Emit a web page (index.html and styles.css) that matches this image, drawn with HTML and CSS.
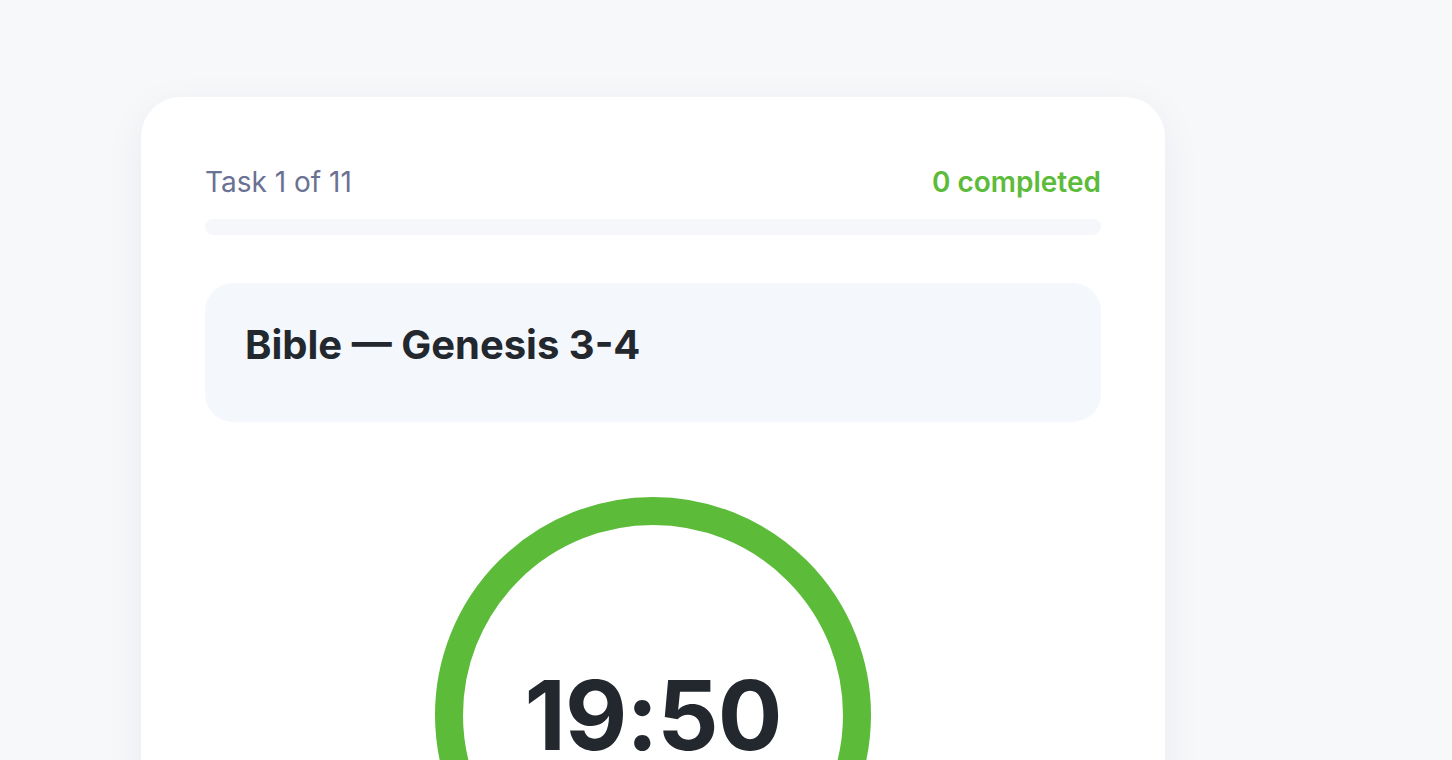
FILE: index.html
```html
<!DOCTYPE html>
<html>
<head>
<meta charset="utf-8">
<link rel="stylesheet" href="styles.css">
</head>
<body>
<main class="page">
  <section class="card">
    <div class="header">
      <span class="task-count">Task 1 of 11</span>
      <span class="completed">0 completed</span>
    </div>
    <div class="progress"><div class="progress-fill" style="width:0%"></div></div>
    <div class="task-box">
      <h1 class="task-title">Bible — Genesis 3-4</h1>
    </div>
    <div class="timer">
      <svg class="ring" width="436" height="436" viewBox="0 0 436 436">
        <circle cx="218" cy="218" r="204" fill="none" stroke="#5cbc3a" stroke-width="28"/>
      </svg>
      <div class="time">19:50</div>
    </div>
  </section>
</main>
</body>
</html>
```
FILE: styles.css
```css
html, body {
  margin: 0;
  padding: 0;
  background: #f7f8fa;
  font-family: Inter, "Noto Sans", sans-serif;
  overflow: hidden;
}
.page {
  display: flex;
  padding: 97px 0 0 141px;
  height: 760px;
  box-sizing: border-box;
}
.card {
  width: 1024px;
  background: #ffffff;
  border-radius: 40px;
  padding: 64px 64px 0;
  box-sizing: border-box;
  box-shadow: 0 10px 40px rgba(20, 30, 60, 0.06);
  height: 900px;
  flex-shrink: 0;
}
.header {
  display: flex;
  justify-content: space-between;
  align-items: center;
  height: 42px;
}
.task-count {
  font-size: 28px;
  color: #6b7193;
  font-weight: 400;
}
.completed {
  font-size: 28px;
  color: #5cbc3a;
  font-weight: 600;
}
.progress {
  margin-top: 16px;
  height: 16px;
  border-radius: 8px;
  background: #f5f7fa;
  overflow: hidden;
}
.progress-fill {
  height: 100%;
  background: #5cbc3a;
}
.task-box {
  margin-top: 48px;
  background: #f4f7fc;
  border-radius: 28px;
  padding: 38px 40px 53px;
}
.task-title {
  margin: 0;
  font-size: 40px;
  line-height: 48px;
  font-weight: 700;
  color: #23272e;
}
.timer {
  margin: 75px auto 0;
  width: 436px;
  height: 436px;
  position: relative;
  display: flex;
  align-items: center;
  justify-content: center;
}
.ring {
  position: absolute;
  left: 0;
  top: 0;
}
.time {
  position: relative;
  font-size: 96px;
  font-weight: 700;
  color: #23272e;
  letter-spacing: -1px;
}
```
